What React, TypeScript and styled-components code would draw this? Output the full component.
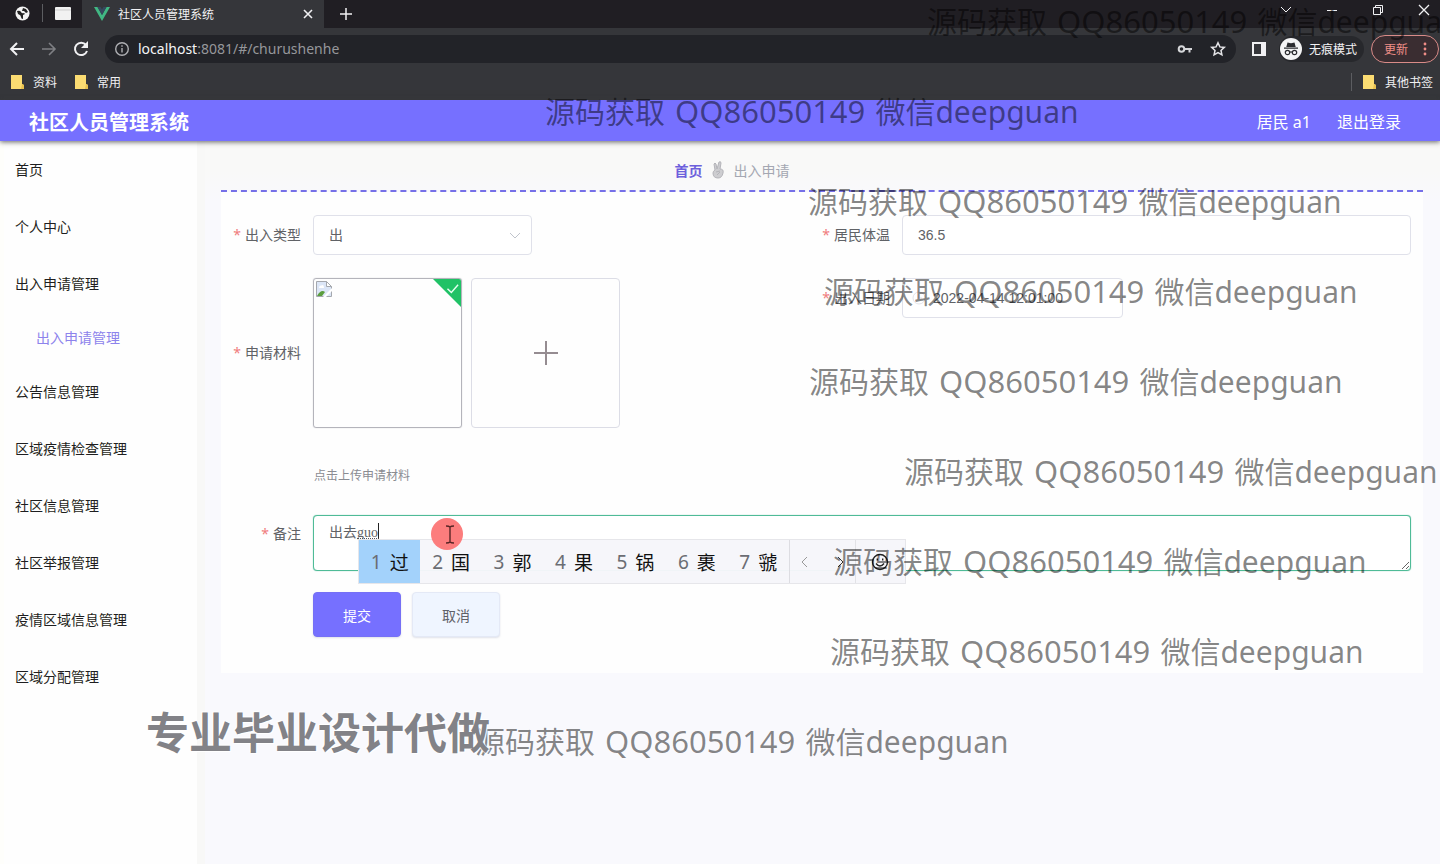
import React from "react";
import styled, { createGlobalStyle } from "styled-components";

const cjk = '"Noto Sans CJK SC", sans-serif';

const GlobalStyle = createGlobalStyle`
  *, *::before, *::after { box-sizing: border-box; }
  body {
    margin: 0;
    font-family: "Noto Sans", ${cjk};
    font-size: 14px;
    color: #606266;
    background: #f9f9fd;
  }
  button, input, select, textarea { font: inherit; color: inherit; margin: 0; }
  a { color: inherit; text-decoration: none; }
`;

const Page = styled.div`
  position: relative;
  min-height: 100vh;
  display: flex;
  flex-direction: column;
  overflow: hidden;
`;

/* ---------- browser window ---------- */

const Browser = styled.div`
  height: 100px;
  background: #35363a;
  color: #f1f1f3;
  font-size: 12px;
  display: flex;
  flex-direction: column;
`;

const TabStrip = styled.div`
  height: 28px;
  display: flex;
  align-items: center;
  background: #201e23;
`;

const PinnedTabs = styled.div`
  width: 82px;
  display: flex;
  align-items: center;
  padding-left: 15px;
  padding-bottom: 2px;
  gap: 12px;
`;

const Divider = styled.span<{ $h?: number }>`
  width: 1px;
  height: ${(p) => p.$h ?? 18}px;
  background: #5c5d61;
`;

const Tab = styled.div`
  width: 242px;
  height: 28px;
  padding: 0 10px 0 12px;
  display: flex;
  align-items: center;
  gap: 8px;
  background: #35363a;
`;

const TabTitle = styled.span`
  flex: 1;
`;

const IconButton = styled.button`
  display: flex;
  align-items: center;
  justify-content: center;
  padding: 0;
  border: 0;
  background: none;
  color: #f1f1f3;
`;

const NewTab = styled(IconButton)`
  width: 44px;
`;

const WindowButtons = styled.div`
  margin-left: auto;
  padding-right: 10px;
  height: 20px;
  margin-bottom: 8px;
  display: flex;
  align-items: center;
  gap: 34px;
`;

const Toolbar = styled.div`
  height: 41px;
  display: flex;
  align-items: center;
  padding: 0 1px 0 8px;
`;

const NavButtons = styled.div`
  width: 97px;
  display: flex;
  gap: 14px;
`;

const AddressBar = styled.div`
  flex: 1;
  height: 28px;
  border-radius: 14px;
  padding: 0 1px 0 9px;
  display: flex;
  align-items: center;
  gap: 8px;
  background: #222328;
`;

const Url = styled.span`
  flex: 1;
  font-size: 14px;
  color: #96979b;
  b {
    font-weight: 400;
    color: #f4f4f6;
  }
`;

const Incognito = styled.div`
  height: 26px;
  margin-left: 11px;
  padding-right: 7px;
  border-radius: 13px;
  display: flex;
  align-items: center;
  gap: 6px;
  background: #27282c;
`;

const UpdateButton = styled.button`
  width: 68px;
  height: 28px;
  margin-left: 7px;
  padding: 0 8px 0 12px;
  display: flex;
  align-items: center;
  justify-content: space-between;
  border: 1px solid #d98b88;
  border-radius: 14px;
  background: #3a2d31;
  color: #f08d87;
  font-size: 12px;
`;

const Bookmarks = styled.div`
  height: 25px;
  display: flex;
  align-items: center;
  padding: 0 7px 0 11px;
  gap: 18px;
`;

const Bookmark = styled.a`
  display: flex;
  align-items: center;
  gap: 9px;
`;

const OtherBookmarks = styled.div`
  margin-left: auto;
  display: flex;
  align-items: center;
  gap: 11px;
`;

/* ---------- application ---------- */

const Header = styled.header`
  position: relative;
  z-index: 1;
  height: 41px;
  padding: 0 39px 0 29px;
  display: flex;
  align-items: center;
  justify-content: space-between;
  background: #7670ff;
  color: #fff;
  box-shadow: 0 1px 5px rgba(60, 60, 60, 0.8);
`;

const Brand = styled.h1`
  margin: 0;
  padding-top: 4px;
  font-size: 20px;
  line-height: 28px;
  font-weight: 700;
`;

const Account = styled.div`
  display: flex;
  gap: 26px;
  font-size: 16px;
`;

const Body = styled.div`
  flex: 1;
  display: flex;
`;

const Sidebar = styled.nav`
  width: 197px;
  background: #fefefe;
  border-left: 4px solid #fefefb;
  color: #1e1e20;
`;

const MenuLink = styled.a<{ $sub?: boolean }>`
  display: flex;
  align-items: center;
  height: ${(p) => (p.$sub ? 51 : 57)}px;
  padding-bottom: 2px;
  padding-left: ${(p) => (p.$sub ? 32 : 11)}px;
  color: ${(p) => (p.$sub ? "#8d83ec" : "inherit")};
`;

const Main = styled.main`
  flex: 1;
  min-width: 0;
  padding: 9px 17px 0 16px;
  border-left: 8px solid #f8f8f7;
  background: linear-gradient(#f9f9f8 0, #f9f9f8 30px, #f9f9fd 60px);
`;

const Breadcrumb = styled.div`
  height: 42px;
  padding-right: 180px;
  display: flex;
  align-items: center;
  justify-content: center;
  gap: 8px;
  border-bottom: 2px dashed #7670e8;
  color: #a4a7b2;
  a {
    font-weight: 700;
    color: #6d60dc;
  }
`;

const Form = styled.form`
  padding: 23px 12px 36px;
  background: #fefefe;
`;

const Columns = styled.div`
  display: grid;
  grid-template-columns: 1fr 1fr;
  align-items: start;
  row-gap: 23px;
`;

const Field = styled.div`
  display: flex;
  align-items: center;
`;

const Label = styled.label`
  width: 80px;
  padding-right: 12px;
  padding-bottom: 2px;
  text-align: right;
  white-space: nowrap;
  &::before {
    content: "*";
    margin-right: 4px;
    color: #f07c7c;
  }
`;

const Control = styled.input`
  flex: 1;
  min-width: 0;
  height: 40px;
  padding: 0 15px;
  border: 1px solid #e0e1ea;
  border-radius: 4px;
  background: #fff;
  font-family: "Liberation Sans", ${cjk};
`;

const SelectBox = styled.div`
  position: relative;
  width: 219px;
  display: flex;
  svg {
    position: absolute;
    right: 11px;
    top: 16px;
  }
`;

const Select = styled(Control).attrs({ as: "select" })`
  appearance: none;
`;

const DateBox = styled.div`
  position: relative;
  width: 221px;
  display: flex;
  svg {
    position: absolute;
    left: 10px;
    top: 13px;
  }
  input {
    padding-left: 30px;
  }
`;

const Uploads = styled.div`
  display: flex;
  gap: 9px;
`;

const Thumb = styled.div`
  position: relative;
  overflow: hidden;
  width: 149px;
  height: 150px;
  padding: 2px;
  border: 1px solid #b4b4bb;
  border-radius: 3px;
  box-shadow: 0 0 1px #b4b4bb;
`;

const DoneMark = styled.svg`
  position: absolute;
  top: 0;
  right: 0;
`;

const AddFile = styled.button`
  width: 149px;
  height: 150px;
  display: flex;
  align-items: center;
  justify-content: center;
  border: 1px solid #dcdde6;
  border-radius: 4px;
  background: #fefefe;
`;

const Tip = styled.p`
  margin: 38px 0 29px 81px;
  font-size: 12px;
  line-height: 20px;
  color: #8a8c92;
`;

const Note = styled.div`
  position: relative;
  flex: 1;
  display: flex;
`;

const RemarkField = styled(Field)`
  align-items: flex-start;
  ${Label} {
    line-height: 37px;
  }
`;

const TextArea = styled.textarea`
  flex: 1;
  height: 56px;
  padding: 6px 15px;
  border: 1px solid #4fbb97;
  border-radius: 4px;
  box-shadow: 0 0 1px #4fbb97;
  background: #fff;
  font-family: "Liberation Serif", ${cjk};
  line-height: 21px;
  outline: 0;
`;

const Composing = styled.span`
  position: absolute;
  left: 44px;
  top: 8px;
  width: 22px;
  height: 16px;
  border-bottom: 1px dotted #55575c;
  border-right: 1px solid #222;
`;

const Cursor = styled.svg`
  position: absolute;
  z-index: 3;
  left: 118px;
  top: 2px;
`;

const Candidates = styled.div`
  position: absolute;
  z-index: 2;
  left: 45px;
  top: 24px;
  width: 548px;
  height: 45px;
  display: flex;
  border: 1px solid #e6e6ea;
  background: rgba(246, 246, 250, 0.97);
  font-size: 19px;
`;

const Candidate = styled.button<{ $on?: boolean }>`
  flex: 1;
  padding: 0;
  display: flex;
  align-items: center;
  justify-content: center;
  gap: 8px;
  border: 0;
  background: ${(p) => (p.$on ? "#a3d2fb" : "none")};
  color: #111;
  span {
    color: #6b6d73;
  }
`;

const Pager = styled.div`
  width: 66px;
  padding: 0 10px;
  display: flex;
  align-items: center;
  justify-content: space-between;
  border-left: 1px solid #dddde2;
`;

const Emoji = styled(IconButton)`
  width: 50px;
  border-left: 1px solid #e2e2e6;
`;

const Actions = styled.div`
  margin: 21px 0 0 80px;
  display: flex;
  gap: 11px;
`;

const Action = styled.button<{ $primary?: boolean }>`
  width: 88px;
  height: 45px;
  border: 1px solid ${(p) => (p.$primary ? "#7670f5" : "#e4e9f6")};
  border-radius: 4px;
  background: ${(p) => (p.$primary ? "#7670ff" : "#eff5ff")};
  color: ${(p) => (p.$primary ? "#fff" : "#5f6168")};
  box-shadow: 0 1px 2px rgba(100, 110, 150, 0.2);
`;

/* ---------- watermarks ---------- */

const Watermarks = styled.div`
  position: absolute;
  inset: 0;
  z-index: 3;
  overflow: hidden;
  pointer-events: none;
`;

const Mark = styled.span<{ $x: number; $y: number }>`
  position: absolute;
  left: ${(p) => p.$x}px;
  top: ${(p) => p.$y}px;
  white-space: pre;
  font-size: 30px;
  line-height: 40px;
  color: rgba(0, 0, 0, 0.48);
  span {
    margin: 0 2px;
    font-size: 31px;
  }
`;

const Slogan = styled.strong`
  position: absolute;
  left: 146px;
  top: 703px;
  font-size: 43px;
  line-height: 60px;
  font-weight: 700;
  color: #828287;
  white-space: nowrap;
  text-shadow: 0 0 2px #fff, 1px 1px 1px #fff, -1px -1px 1px #fff;
`;

const marks = [
  [927, 1],
  [545, 91],
  [808, 181],
  [824, 271],
  [809, 361],
  [904, 451],
  [833, 541],
  [830, 631],
  [475, 721],
];

const menu = [
  { text: "首页" },
  { text: "个人中心" },
  { text: "出入申请管理" },
  { text: "出入申请管理", sub: true },
  { text: "公告信息管理" },
  { text: "区域疫情检查管理" },
  { text: "社区信息管理" },
  { text: "社区举报管理" },
  { text: "疫情区域信息管理" },
  { text: "区域分配管理" },
];

const words = ["过", "国", "郭", "果", "锅", "裹", "虢"];

const Chevron = ({ d, color = "#999" }: { d: string; color?: string }) => (
  <svg width="9" height="14" viewBox="0 0 9 14" fill="none" stroke={color}>
    <path d={d} />
  </svg>
);

const Folder = () => (
  <svg width="13" height="15" viewBox="0 0 13 15">
    <path d="M0 1h11v9l2 1v4H0z" fill="#fbdc72" />
    <path d="M11 10l2 1v4h-3z" fill="#e9c14f" />
  </svg>
);

const BrowserChrome = () => (
  <Browser>
    <TabStrip>
      <PinnedTabs>
        <svg width="15" height="15" viewBox="0 0 15 15">
          <circle cx="7.500" cy="7.500" r="7" fill="#f3f3f3" />
          <path d="M2 5q3-1 4 1t3 1l1 1-2 1v4q-2 0-2-2T3 8zM8 2l3 1 2 3-2 1-2-2H7z" fill="#222" />
        </svg>
        <Divider />
        <svg width="16" height="13" viewBox="0 0 16 13">
          <rect width="16" height="13" rx="1" fill="#f1f1f1" />
          <path d="M0 3h16" stroke="#cfcfcf" />
        </svg>
      </PinnedTabs>
      <Tab>
        <svg width="16" height="14" viewBox="0 0 16 14">
          <path d="M0 0h3.500L8 8l4.500-8H16L8 14z" fill="#41b883" />
          <path d="M3.500 0h3L8 2.600 9.500 0h3L8 8z" fill="#35495e" />
        </svg>
        <TabTitle>社区人员管理系统</TabTitle>
        <IconButton aria-label="关闭标签页">
          <svg width="12" height="10" viewBox="0 0 12 10" stroke="currentColor" strokeWidth="1.600">
            <path d="M2 1l8 8M10 1L2 9" />
          </svg>
        </IconButton>
      </Tab>
      <NewTab aria-label="新标签页">
        <svg width="12" height="12" viewBox="0 0 12 12" stroke="currentColor" strokeWidth="1.500">
          <path d="M6 0v12M0 6h12" />
        </svg>
      </NewTab>
      <WindowButtons>
        <IconButton aria-label="搜索标签页">
          <svg width="12" height="12" viewBox="0 0 12 12" fill="none" stroke="currentColor"><path d="M1 3l5 5 5-5" /></svg>
        </IconButton>
        <IconButton aria-label="最小化">
          <svg width="12" height="12" viewBox="0 0 12 12" stroke="currentColor"><path d="M1 6.500h10" /></svg>
        </IconButton>
        <IconButton aria-label="还原">
          <svg width="12" height="12" viewBox="0 0 12 12" fill="none" stroke="currentColor"><path d="M1.500 3.500h7v7h-7zM3.500 3V1.500h7v7H9" /></svg>
        </IconButton>
        <IconButton aria-label="关闭">
          <svg width="12" height="12" viewBox="0 0 12 12" stroke="currentColor" strokeWidth="1.300"><path d="M1 1l10 10M11 1L1 11" /></svg>
        </IconButton>
      </WindowButtons>
    </TabStrip>
    <Toolbar>
      <NavButtons>
        <IconButton aria-label="后退">
          <svg width="18" height="18" viewBox="0 0 18 18" fill="none" stroke="currentColor" strokeWidth="2"><path d="M16 9H3M9 3L3 9l6 6" /></svg>
        </IconButton>
        <IconButton aria-label="前进">
          <svg width="18" height="18" viewBox="0 0 18 18" fill="none" stroke="#7f8084" strokeWidth="1.600"><path d="M2 9h13M9 3l6 6-6 6" /></svg>
        </IconButton>
        <IconButton aria-label="刷新">
          <svg width="18" height="18" viewBox="0 0 18 18" fill="none" stroke="currentColor" strokeWidth="2">
            <path d="M14 5a6.200 6.200 0 1 0 1 6" />
            <path d="M16 1v7H9z" fill="currentColor" stroke="none" />
          </svg>
        </IconButton>
      </NavButtons>
      <AddressBar>
        <svg width="16" height="16" viewBox="0 0 16 16" fill="none" stroke="#aeafb3" strokeWidth="1.400">
          <circle cx="8" cy="8" r="6.300" />
          <path d="M8 7v4.500M8 4.300v1.500" />
        </svg>
        <Url><b>localhost</b>:8081/#/churushenhe</Url>
        <IconButton aria-label="密码">
          <svg width="16" height="10" viewBox="0 0 16 10" fill="none" stroke="#d5d6d9" strokeWidth="2">
            <circle cx="4.500" cy="5" r="2.800" />
            <path d="M7 5h8M12.500 5v3.500" />
          </svg>
        </IconButton>
        <IconButton aria-label="收藏">
          <svg width="34" height="16" viewBox="0 0 34 16" fill="none" stroke="#e5e5e8" strokeWidth="1.500">
            <path d="M17 1.800l1.900 4.100 4.400.5-3.300 3 .9 4.400L17 11.600l-3.900 2.200.9-4.400-3.300-3 4.400-.5z" />
          </svg>
        </IconButton>
      </AddressBar>
      <IconButton aria-label="侧边栏">
        <svg width="32" height="14" viewBox="0 0 32 14">
          <path d="M16 0h14v14H16zM18 2v10h7V2z" fill="#f1f1f3" fillRule="evenodd" />
        </svg>
      </IconButton>
      <Incognito>
        <svg width="24" height="24" viewBox="0 0 24 24">
          <circle cx="12" cy="12" r="11" fill="#f4f4f5" />
          <path d="M8.500 5.500l3.500.8 3.500-.8 1.200 4.500H7.300zM5 10.500h14v1.300H5z" fill="#2b2c30" />
          <g fill="none" stroke="#2b2c30" strokeWidth="1.200"><circle cx="8.500" cy="15.500" r="2.200" /><circle cx="15.500" cy="15.500" r="2.200" /><path d="M10.500 15h3" /></g>
        </svg>
        无痕模式
      </Incognito>
      <UpdateButton>
        更新
        <svg width="10" height="16" viewBox="0 0 10 16" fill="currentColor">
          <circle cx="5" cy="3" r="1.400" /><circle cx="5" cy="8" r="1.400" /><circle cx="5" cy="13" r="1.400" />
        </svg>
      </UpdateButton>
    </Toolbar>
    <Bookmarks>
      <Bookmark href="#"><Folder />资料</Bookmark>
      <Bookmark href="#"><Folder />常用</Bookmark>
      <OtherBookmarks>
        <Divider />
        <Bookmark href="#"><Folder />其他书签</Bookmark>
      </OtherBookmarks>
    </Bookmarks>
  </Browser>
);

export default function App() {
  return (
    <Page>
      <GlobalStyle />
      <BrowserChrome />
      <Header>
        <Brand>社区人员管理系统</Brand>
        <Account>
          <span>居民 a1</span>
          <a href="#">退出登录</a>
        </Account>
      </Header>
      <Body>
        <Sidebar>
          {menu.map((m, i) => (
            <MenuLink key={i} href="#" $sub={m.sub}>{m.text}</MenuLink>
          ))}
        </Sidebar>
        <Main>
          <Breadcrumb>
            <a href="#">首页</a>
            <svg width="15" height="18" viewBox="0 0 15 18" fill="#cdcdd0" stroke="#b4b4b9">
              <path d="M4 9L3 3q1-2 2 0l1 5 2-7q2-1 2 1L9 8q4 0 3 4-1 5-5 5-5 0-5-5 0-2 2-3z" />
              <path d="M5 11l4-1M6 14l3-3" />
            </svg>
            <span>出入申请</span>
          </Breadcrumb>
          <Form onSubmit={(e) => e.preventDefault()}>
            <Columns>
              <Field>
                <Label htmlFor="type">出入类型</Label>
                <SelectBox>
                  <Select id="type"><option>出</option></Select>
                  <svg width="12" height="10" viewBox="0 0 12 10" fill="none" stroke="#c0c4cc"><path d="M1 2l5 5 5-5" /></svg>
                </SelectBox>
              </Field>
              <Field>
                <Label htmlFor="temp">居民体温</Label>
                <Control id="temp" defaultValue="36.5" />
              </Field>
              <Field>
                <Label htmlFor="file">申请材料</Label>
                <Uploads>
                  <Thumb>
                    <svg width="16" height="16" viewBox="0 0 16 16">
                      <path d="M.5.500h10l5 5v10H.5z" fill="#dce6f7" stroke="#a5a8ae" />
                      <path d="M10.500.500v5h5z" fill="#fff" stroke="#a5a8ae" />
                      <path d="M3 7q0-3 2.500-2.500Q8 3 8 7z" fill="#fff" />
                      <path d="M1 15q4-7 8-4l-3 4z" fill="#5b9e3e" />
                      <path d="M16 7L7 16h3l6-6z" fill="#fff" />
                    </svg>
                    <DoneMark width="28" height="28" viewBox="0 0 29 29">
                      <path d="M0 0h29v29z" fill="#20c266" />
                      <path d="M15 10l4 4 7-8" fill="none" stroke="#e5fff0" strokeWidth="1.500" />
                    </DoneMark>
                  </Thumb>
                  <AddFile id="file" type="button">
                    <svg width="24" height="24" viewBox="0 0 24 24" stroke="#958c91" strokeWidth="2"><path d="M12 0v24M0 12h24" /></svg>
                  </AddFile>
                </Uploads>
              </Field>
              <Field>
                <Label htmlFor="date">出入日期</Label>
                <DateBox>
                  <Control id="date" defaultValue="2022-04-14 12:01:00" />
                  <svg width="14" height="14" viewBox="0 0 14 14" fill="none" stroke="#e3e4ea"><circle cx="7" cy="7" r="6" /><path d="M7 3v4h3" /></svg>
                </DateBox>
              </Field>
            </Columns>
            <Tip>点击上传申请材料</Tip>
            <RemarkField>
              <Label htmlFor="note">备注</Label>
              <Note>
                <TextArea id="note" defaultValue="出去guo" />
                <Composing />
                <Cursor width="32" height="34" viewBox="0 0 32 34">
                  <circle cx="16" cy="17" r="16" fill="#fc7d7d" />
                  <path d="M15 9q3 0 4 1 1-1 4-1M19 10v16M15 26q3 0 4-1 1 1 4 1" fill="none" stroke="#5a2626" strokeWidth="1.400" />
                </Cursor>
                <Candidates>
                  {words.map((w, i) => (
                    <Candidate key={w} type="button" $on={i === 0}><span>{i + 1}</span>{w}</Candidate>
                  ))}
                  <Pager>
                    <Chevron d="M7 2L2 7l5 5" />
                    <Chevron d="M2 2l5 5-5 5" color="#333" />
                  </Pager>
                  <Emoji type="button" aria-label="表情">
                    <svg width="18" height="18" viewBox="0 0 18 18" fill="none" stroke="#222" strokeWidth="1.400">
                      <circle cx="9" cy="9" r="7.500" />
                      <path d="M5 10.500q4 5 8 0M6.300 5.500v2M11.700 5.500v2" />
                    </svg>
                  </Emoji>
                </Candidates>
              </Note>
            </RemarkField>
            <Actions>
              <Action $primary>提交</Action>
              <Action type="button">取消</Action>
            </Actions>
          </Form>
        </Main>
      </Body>
      <Watermarks>
        {marks.map(([x, y]) => (
          <Mark key={y} $x={x} $y={y}>源码获取<span> QQ86050149 </span>微信deepguan</Mark>
        ))}
        <Slogan>专业毕业设计代做</Slogan>
      </Watermarks>
    </Page>
  );
}
